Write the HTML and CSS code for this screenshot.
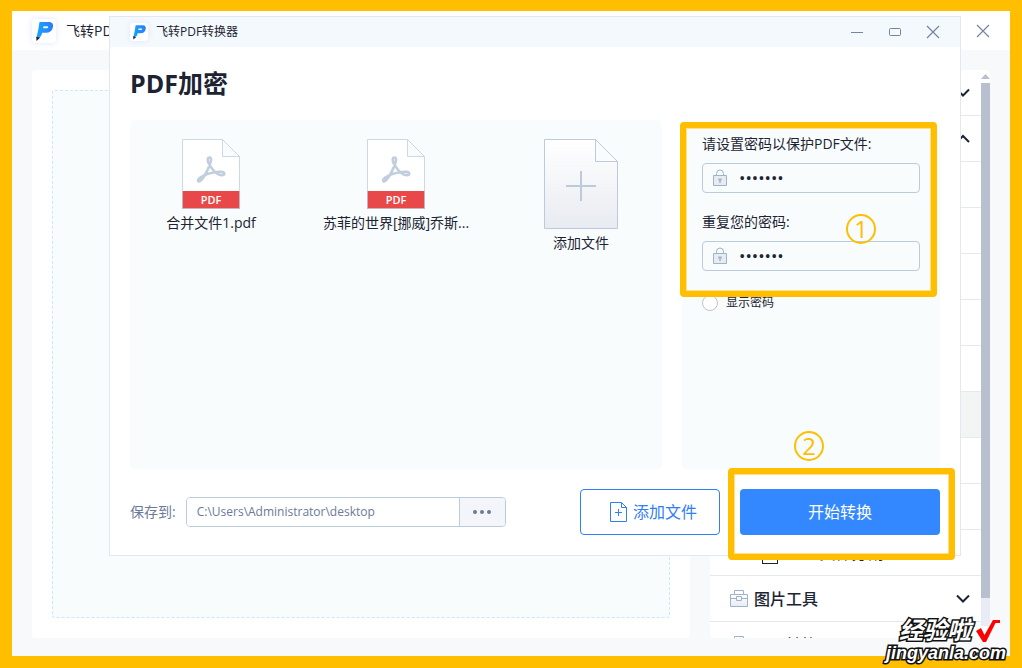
FILE: index.html
```html
<!DOCTYPE html>
<html lang="zh-CN">
<head>
<meta charset="utf-8">
<title>飞转PDF转换器</title>
<link rel="stylesheet" href="styles.css">
</head>
<body>
<svg class="defs" aria-hidden="true">
  <defs>
    <linearGradient id="blue" x1="0" y1="0" x2="1" y2="0"><stop offset="0" stop-color="#16a5ff"/><stop offset="1" stop-color="#2a7cfa"/></linearGradient>
    <linearGradient id="paper" x1="0" y1="0" x2="0" y2="1"><stop offset="0" stop-color="#fff"/><stop offset="1" stop-color="#e8ebf1"/></linearGradient>
    <symbol id="logo" viewBox="0 0 24 24">
      <path d="M7.500 3H17C20.300 3 21.600 5.300 20.900 8.200C20.100 11.800 17.800 13.700 14.200 13.700H10.200L9 17.300L4.300 19.400L6.300 10.500Z" fill="url(#blue)"/>
      <path d="M11.500 7.300H15.500C16.600 7.300 16.400 9.300 15 9.300H11Z" fill="#eaf5ff"/>
      <path d="M4.300 17.800L8.300 18.600L4.500 22Z" fill="#20242e"/>
    </symbol>
    <symbol id="pdf" viewBox="0 0 58 70">
      <path d="M.5.5H40.500L57.500 17.500V69.500H.5Z" fill="#fff" stroke="#cdd8e5"/>
      <path d="M40.500.5V17.500H57.500Z" fill="#f8fcfe" stroke="#cdd8e5"/>
      <path d="M.5 52H57.500V69.500H.5Z" fill="#e94848"/>
      <path d="M.5 52V69.500H57.500V52" fill="none" stroke="#c3b4bf"/>
      <path d="M27.500 18.500C25.300 18.500 25.300 22 26.800 24.500C28.700 28 31.500 32.200 35 34.500C38 36.600 42.300 36.900 42.300 34.700C42.300 32.400 37 32.600 33 33.200C27.500 34 22 35.700 18.300 38.500C15.500 40.700 15.500 42.600 17 42.400C19.300 42 22 37.800 24.200 33.600C26.500 29.200 28.500 24.500 29 21.500C29.300 19.500 28.800 18.500 27.500 18.500Z" fill="none" stroke="#c0cedd" stroke-width="2.600" stroke-linejoin="round"/>
    </symbol>
    <symbol id="lock" viewBox="0 0 16 18">
      <path d="M4.500 6V4.500A3.500 3.500 0 0 1 11.500 4.500V6" fill="none" stroke="#9fb3c8"/>
      <path d="M1.500 6.500H14.500V16.500H1.500Z" fill="#e8ecf2" stroke="#9fb3c8"/>
      <path d="M6.300 9.500H9.700V11.500H8.700V14H7.300V11.500H6.300Z" fill="#9fb3c8"/>
    </symbol>
    <symbol id="close" viewBox="0 0 14 14"><path d="M1 1L13 13M13 1L1 13" fill="none" stroke="#7683a0" stroke-width="1.200"/></symbol>
    <symbol id="case" viewBox="0 0 18 18">
      <path d="M4.500 4V.5H13.500V4" fill="#fff" stroke="#9fb3c8"/>
      <path d="M.5 4.500H17.500V16.500H.5Z" fill="url(#paper)" stroke="#9fb3c8"/>
      <path d="M.5 8.500H7M11 8.500H17.500M6.500 6.500H11.500V10.500H6.500Z" fill="none" stroke="#9fb3c8"/>
    </symbol>
    <symbol id="down" viewBox="0 0 14 10"><path d="M1 1.500L7 7.500L13 1.500" fill="none" stroke="#1c2433" stroke-width="2"/></symbol>
    <symbol id="up" viewBox="0 0 14 10"><path d="M1 8L7 2L13 8" fill="none" stroke="#1c2433" stroke-width="2"/></symbol>
  </defs>
</svg>

<div class="window">
  <header class="bar">
    <svg class="logo"><use href="#logo"/></svg>
    <span class="name">飞转PDF转换器</span>
    <button class="close" aria-label="关闭"><svg width="14" height="14"><use href="#close"/></svg></button>
  </header>

  <main class="content">
    <section class="panel"><div class="dropzone"></div></section>
    <aside class="tools">
      <ul class="menu">
        <li class="row"><svg class="arrow"><use href="#down"/></svg></li>
        <li class="row"><svg class="arrow"><use href="#up"/></svg></li>
        <li class="row"></li>
        <li class="row"></li>
        <li class="row"></li>
        <li class="row"></li>
        <li class="row"></li>
        <li class="row active"></li>
        <li class="row"></li>
        <li class="row"></li>
        <li class="row sub"><span class="mark"></span><span>PDF文件分割</span></li>
        <li class="row"><svg class="case"><use href="#case"/></svg><span>图片工具</span><svg class="arrow"><use href="#down"/></svg></li>
        <li class="row"><svg class="case"><use href="#case"/></svg><span>CAD转换工具</span></li>
      </ul>
      <div class="scroll">
        <svg width="9" height="13" viewBox="0 0 9 13"><path d="M0 9L4.500 4L9 9Z" fill="#b8bfcf"/></svg>
        <div class="thumb"></div>
      </div>
    </aside>
  </main>

  <div class="dialog" role="dialog" aria-labelledby="title">
    <header class="dialog-bar">
      <svg class="logo"><use href="#logo"/></svg>
      <span class="name">飞转PDF转换器</span>
      <div class="controls">
        <button aria-label="最小化"><svg width="14" height="14"><path d="M1 7.500H13" stroke="#7683a0"/></svg></button>
        <button aria-label="最大化"><svg width="14" height="14"><rect x="1.500" y="3.500" width="11" height="7" rx="1" fill="none" stroke="#7683a0"/></svg></button>
        <button aria-label="关闭"><svg width="14" height="14"><use href="#close"/></svg></button>
      </div>
    </header>
    <div class="dialog-body">
      <h1 id="title">PDF加密</h1>
      <div class="columns">
        <section class="files">
          <figure class="file">
            <div class="doc"><svg><use href="#pdf"/></svg><span class="tag">PDF</span></div>
            <figcaption>合并文件1.pdf</figcaption>
          </figure>
          <figure class="file">
            <div class="doc"><svg><use href="#pdf"/></svg><span class="tag">PDF</span></div>
            <figcaption>苏菲的世界[挪威]乔斯...</figcaption>
          </figure>
          <button class="file add-file">
            <svg width="74" height="90" viewBox="0 0 74 90"><path d="M.5.5H51.500L73.500 22.500V89.500H.5Z" fill="url(#paper)" stroke="#bccada"/><path d="M51.500.5V22.500H73.500Z" fill="#f8fcfd" stroke="#bccada"/><path d="M22 47H52M37 32V62" stroke="#bccada" stroke-width="2"/></svg>
            <span>添加文件</span>
          </button>
        </section>
        <form class="options">
          <div class="fields">
            <label for="pw1">请设置密码以保护PDF文件:</label>
            <div class="field"><svg width="16" height="18"><use href="#lock"/></svg><input id="pw1" type="password" value="1234567" autocomplete="off"></div>
            <label for="pw2">重复您的密码:</label>
            <div class="field"><svg width="16" height="18"><use href="#lock"/></svg><input id="pw2" type="password" value="1234567" autocomplete="off"></div>
            <div class="frame frame-fields"></div>
            <span class="step step-one">1</span>
          </div>
          <label class="show"><input type="radio" name="show">显示密码</label>
        </form>
      </div>
      <footer class="actions">
        <label for="path">保存到:</label>
        <div class="path"><input id="path" type="text" value="C:\Users\Administrator\desktop"><button aria-label="浏览"><svg width="20" height="6"><circle cx="3" cy="3" r="2"/><circle cx="10" cy="3" r="2"/><circle cx="17" cy="3" r="2"/></svg></button></div>
        <button class="add"><svg width="17" height="20" viewBox="0 0 17 20"><path d="M.5.5H11.500L16.500 5.500V19.500H.5ZM11.500.5V5.500H16.500M5 10.500H12M8.500 7V14" fill="none" stroke="#2f80f7"/></svg><span>添加文件</span></button>
        <div class="start-wrap">
          <button class="start">开始转换</button>
          <div class="frame frame-start"></div>
          <span class="step step-two">2</span>
        </div>
      </footer>
    </div>
  </div>
</div>
<div class="watermark">
  <div class="brand">经验啦<svg width="26" height="26" viewBox="0 0 26 26"><path d="M1 13L6 10L9.500 17L18 2H25V5H20.500L11 24H8Z" fill="#f00"/></svg></div>
  <div class="site">jingyanla.com</div>
</div>
</body>
</html>
```

FILE: styles.css
```css
* { box-sizing: border-box; }
body {
  margin: 0;
  height: 100vh;
  padding: 11px 12px 12px;
  position: relative;
  overflow: hidden;
  background: #ffbe00;
  color: #1c2433;
  font: 14px/20px "Open Sans", "Noto Sans CJK SC", sans-serif;
}
button, input { font: inherit; color: inherit; }
button { border: 0; padding: 0; background: none; }
svg { display: block; flex: none; }
h1, ul, figure { margin: 0; padding: 0; }
.defs { position: absolute; width: 0; height: 0; }

.window { position: relative; height: 100%; display: flex; flex-direction: column; background: #f7f9fb; }
.bar { height: 39px; flex: none; display: flex; align-items: center; gap: 10px; padding: 0 20px; background: #fff; }
.logo { width: 24px; height: 24px; border-radius: 4px; background: #fff; box-shadow: 0 0 6px #e3e6f5; }
.close { margin-left: auto; }
.content { flex: 1; min-height: 0; display: grid; grid-template-columns: minmax(0, 1fr) 280px; gap: 20px; padding: 20px 20px 18px; }
.panel { padding: 20px; background: #fff; border-radius: 4px; }
.dropzone { height: 100%; border: 1px dashed #c9e8fa; border-radius: 3px; background: #f9fcfd; }
.tools { display: flex; overflow: hidden; background: #fff; border-radius: 4px; }
.menu { flex: 1; list-style: none; font-size: 16px; font-weight: 500; }
.row { height: 46px; display: flex; align-items: center; gap: 6px; padding: 0 11px 0 20px; border-bottom: 1px solid #e6e8ec; }
.row.active { background: #f3f5f5; }
.row.sub { gap: 12px; padding-left: 52px; font-weight: 400; }
.mark { width: 16px; height: 22px; border: 1px solid #1c2433; }
.case { width: 18px; height: 18px; }
.arrow { width: 14px; height: 10px; margin-left: auto; }
.scroll { width: 9px; height: 556px; background: #e9ecf5; }
.scroll svg { background: #fff; }
.thumb { height: 515px; background: #b8bfcf; }

.dialog { position: absolute; top: 5px; left: 97px; right: 49px; background: #fff; border: 1px solid #e1e8f4; }
.dialog-bar { height: 30px; display: flex; align-items: center; gap: 8px; padding: 0 20px; background: #f4f9fd; font-size: 12px; }
.dialog-bar .logo { width: 18px; height: 18px; }
.controls { margin-left: auto; display: flex; gap: 24px; }
.dialog-body { padding: 0 20px 20px; }
h1 { height: 73px; font-size: 25px; line-height: 72px; font-weight: 700; }
.columns { display: grid; grid-template-columns: minmax(0, 1fr) 258px; gap: 20px; }
.files { min-height: 349px; display: grid; grid-template-columns: repeat(3, 148px); gap: 37px; align-items: start; padding: 19px 7px; background: #f8fcfd; border-radius: 4px; }
.file { display: flex; flex-direction: column; align-items: center; gap: 4px; white-space: nowrap; }
.doc { width: 58px; height: 70px; display: grid; }
.doc > * { grid-area: 1 / 1; width: 58px; }
.doc svg { height: 70px; }
.tag { align-self: end; color: #fff; font-size: 11px; line-height: 18px; font-weight: 600; text-align: center; }
.options { padding: 14px 20px; background: #f8fcfd; border-radius: 4px; }
.fields { position: relative; }
.fields label { display: block; }
.field { height: 30px; display: flex; align-items: center; gap: 11px; margin: 9px 0 19px; padding: 0 9px; border: 1px solid #bccbda; border-radius: 4px; }
.field input { flex: 1; min-width: 0; padding: 0; border: 0; outline: 0; background: none; font-size: 17px; }
.show { display: flex; align-items: center; gap: 8px; padding-top: 3px; font-size: 12px; }
.show input { appearance: none; width: 16px; height: 16px; margin: 0; border: 1px solid #bcc3d3; border-radius: 50%; background: #fff; }

.actions { display: flex; align-items: center; gap: 20px; margin-top: 20px; color: #6b7a99; }
.path { width: 320px; height: 30px; display: flex; margin: 0 0 0 -10px; border: 1px solid #bccbda; border-radius: 4px; overflow: hidden; font-size: 12px; }
.path input { flex: 1; min-width: 0; padding: 0 10px; border: 0; outline: 0; }
.path button { width: 46px; display: grid; place-items: center; border-left: 1px solid #bccbda; background: #f3f5fa; }
.path circle { fill: #6b7a99; }
.add { width: 140px; height: 46px; display: flex; align-items: center; justify-content: flex-end; gap: 6px; margin-left: auto; padding-right: 22px; border: 1px solid #2f80f7; border-radius: 4px; color: #2f80f7; font-size: 16px; }
.start-wrap { position: relative; width: 200px; }
.start { display: block; width: 100%; height: 46px; border-radius: 4px; background: #3388ff; color: #fff; font-size: 16px; }

.frame { position: absolute; pointer-events: none; border: 6px solid #ffbe00; border-radius: 4px; box-shadow: inset 0 0 0 1px #ffe08a; }
.frame-fields { inset: -12px -17px -26px -22px; }
.frame-start { inset: -21px -15px -25px -12px; }
.step { position: absolute; width: 30px; height: 30px; border: 2px solid #ffbe00; border-radius: 50%; color: #ffbe00; font-size: 24px; line-height: 26px; text-align: center; }
.step-one { right: 44px; top: 80px; }
.step-two { left: 54px; top: -58px; }

.watermark { position: absolute; right: 16px; bottom: 6px; color: #fff; font-family: "Liberation Sans", "Noto Sans CJK SC", sans-serif; font-style: italic; font-weight: 700; -webkit-text-stroke: 3px #111; paint-order: stroke fill; text-align: right; }
.brand { display: flex; justify-content: flex-end; align-items: center; gap: 4px; margin-right: 5px; font-size: 24px; line-height: 26px; }
.brand svg { -webkit-text-stroke: 0; }
.site { font-size: 18px; line-height: 18px; }
```
